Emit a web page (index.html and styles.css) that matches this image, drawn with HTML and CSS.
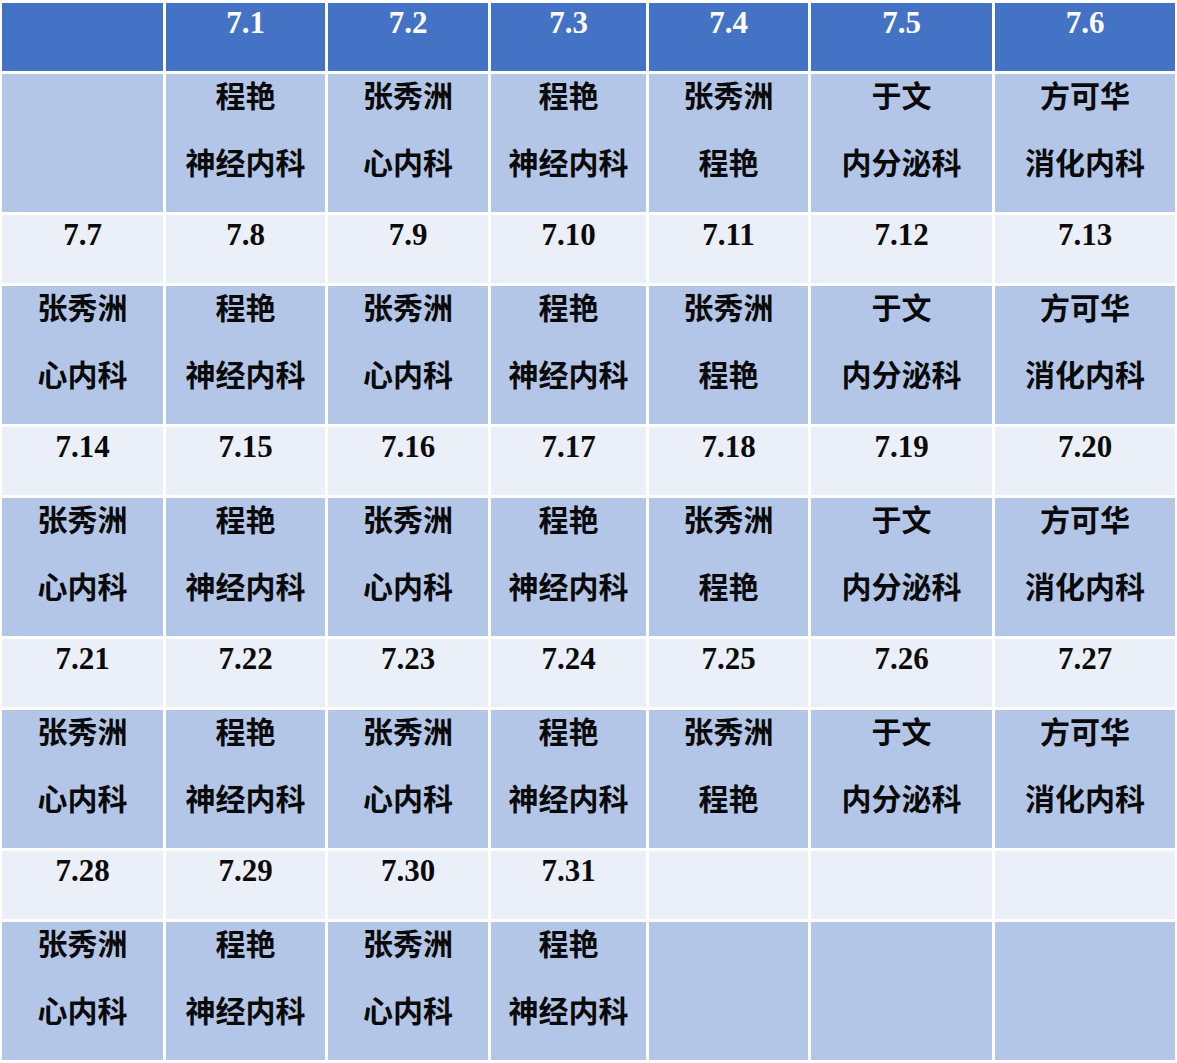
FILE: index.html
```html
<!DOCTYPE html>
<html lang="zh">
<head>
<meta charset="utf-8">
<title>排班表</title>
<link rel="stylesheet" href="styles.css">
</head>
<body>
<div class="sheet">
  <div class="cell head"></div>
  <div class="cell head">7.1</div>
  <div class="cell head">7.2</div>
  <div class="cell head">7.3</div>
  <div class="cell head">7.4</div>
  <div class="cell head">7.5</div>
  <div class="cell head">7.6</div>

  <div class="cell duty"></div>
  <div class="cell duty"><span>程艳</span><span>神经内科</span></div>
  <div class="cell duty"><span>张秀洲</span><span>心内科</span></div>
  <div class="cell duty"><span>程艳</span><span>神经内科</span></div>
  <div class="cell duty"><span>张秀洲</span><span>程艳</span></div>
  <div class="cell duty"><span>于文</span><span>内分泌科</span></div>
  <div class="cell duty"><span>方可华</span><span>消化内科</span></div>

  <div class="cell date">7.7</div>
  <div class="cell date">7.8</div>
  <div class="cell date">7.9</div>
  <div class="cell date">7.10</div>
  <div class="cell date">7.11</div>
  <div class="cell date">7.12</div>
  <div class="cell date">7.13</div>

  <div class="cell duty"><span>张秀洲</span><span>心内科</span></div>
  <div class="cell duty"><span>程艳</span><span>神经内科</span></div>
  <div class="cell duty"><span>张秀洲</span><span>心内科</span></div>
  <div class="cell duty"><span>程艳</span><span>神经内科</span></div>
  <div class="cell duty"><span>张秀洲</span><span>程艳</span></div>
  <div class="cell duty"><span>于文</span><span>内分泌科</span></div>
  <div class="cell duty"><span>方可华</span><span>消化内科</span></div>

  <div class="cell date">7.14</div>
  <div class="cell date">7.15</div>
  <div class="cell date">7.16</div>
  <div class="cell date">7.17</div>
  <div class="cell date">7.18</div>
  <div class="cell date">7.19</div>
  <div class="cell date">7.20</div>

  <div class="cell duty"><span>张秀洲</span><span>心内科</span></div>
  <div class="cell duty"><span>程艳</span><span>神经内科</span></div>
  <div class="cell duty"><span>张秀洲</span><span>心内科</span></div>
  <div class="cell duty"><span>程艳</span><span>神经内科</span></div>
  <div class="cell duty"><span>张秀洲</span><span>程艳</span></div>
  <div class="cell duty"><span>于文</span><span>内分泌科</span></div>
  <div class="cell duty"><span>方可华</span><span>消化内科</span></div>

  <div class="cell date">7.21</div>
  <div class="cell date">7.22</div>
  <div class="cell date">7.23</div>
  <div class="cell date">7.24</div>
  <div class="cell date">7.25</div>
  <div class="cell date">7.26</div>
  <div class="cell date">7.27</div>

  <div class="cell duty"><span>张秀洲</span><span>心内科</span></div>
  <div class="cell duty"><span>程艳</span><span>神经内科</span></div>
  <div class="cell duty"><span>张秀洲</span><span>心内科</span></div>
  <div class="cell duty"><span>程艳</span><span>神经内科</span></div>
  <div class="cell duty"><span>张秀洲</span><span>程艳</span></div>
  <div class="cell duty"><span>于文</span><span>内分泌科</span></div>
  <div class="cell duty"><span>方可华</span><span>消化内科</span></div>

  <div class="cell date">7.28</div>
  <div class="cell date">7.29</div>
  <div class="cell date">7.30</div>
  <div class="cell date">7.31</div>
  <div class="cell date"></div>
  <div class="cell date"></div>
  <div class="cell date"></div>

  <div class="cell duty"><span>张秀洲</span><span>心内科</span></div>
  <div class="cell duty"><span>程艳</span><span>神经内科</span></div>
  <div class="cell duty"><span>张秀洲</span><span>心内科</span></div>
  <div class="cell duty"><span>程艳</span><span>神经内科</span></div>
  <div class="cell duty"></div>
  <div class="cell duty"></div>
  <div class="cell duty"></div>
</div>
</body>
</html>
```

FILE: styles.css
```css
html, body {
  margin: 0;
  padding: 0;
  background: #ffffff;
}

body {
  padding: 3px 0 0 2px;
}

.sheet {
  display: grid;
  grid-template-columns: 161px 159px 160px 155px 159px 181px 180px;
  grid-template-rows: 68px 138px 68px 138px 68px 138px 68px 138px 68px 138px;
  gap: 3px;
  width: max-content;
}

.cell {
  display: flex;
  flex-direction: column;
  align-items: center;
  gap: 27px;
  color: #0a0a0a;
  text-align: center;
  line-height: 40px;
  font-size: 30px;
}

.cell span {
  display: block;
  height: 40px;
}

.head {
  background: #4472c4;
  color: #ffffff;
  font-family: "Liberation Serif", "Noto Sans CJK SC", serif;
  font-weight: 700;
  font-size: 31px;
}

.duty {
  background: #b4c6e7;
  font-family: "Noto Sans CJK SC", sans-serif;
  font-weight: 700;
}

.date {
  background: #eaeff8;
  font-family: "Liberation Serif", serif;
  font-weight: 700;
  font-size: 31px;
}
```
